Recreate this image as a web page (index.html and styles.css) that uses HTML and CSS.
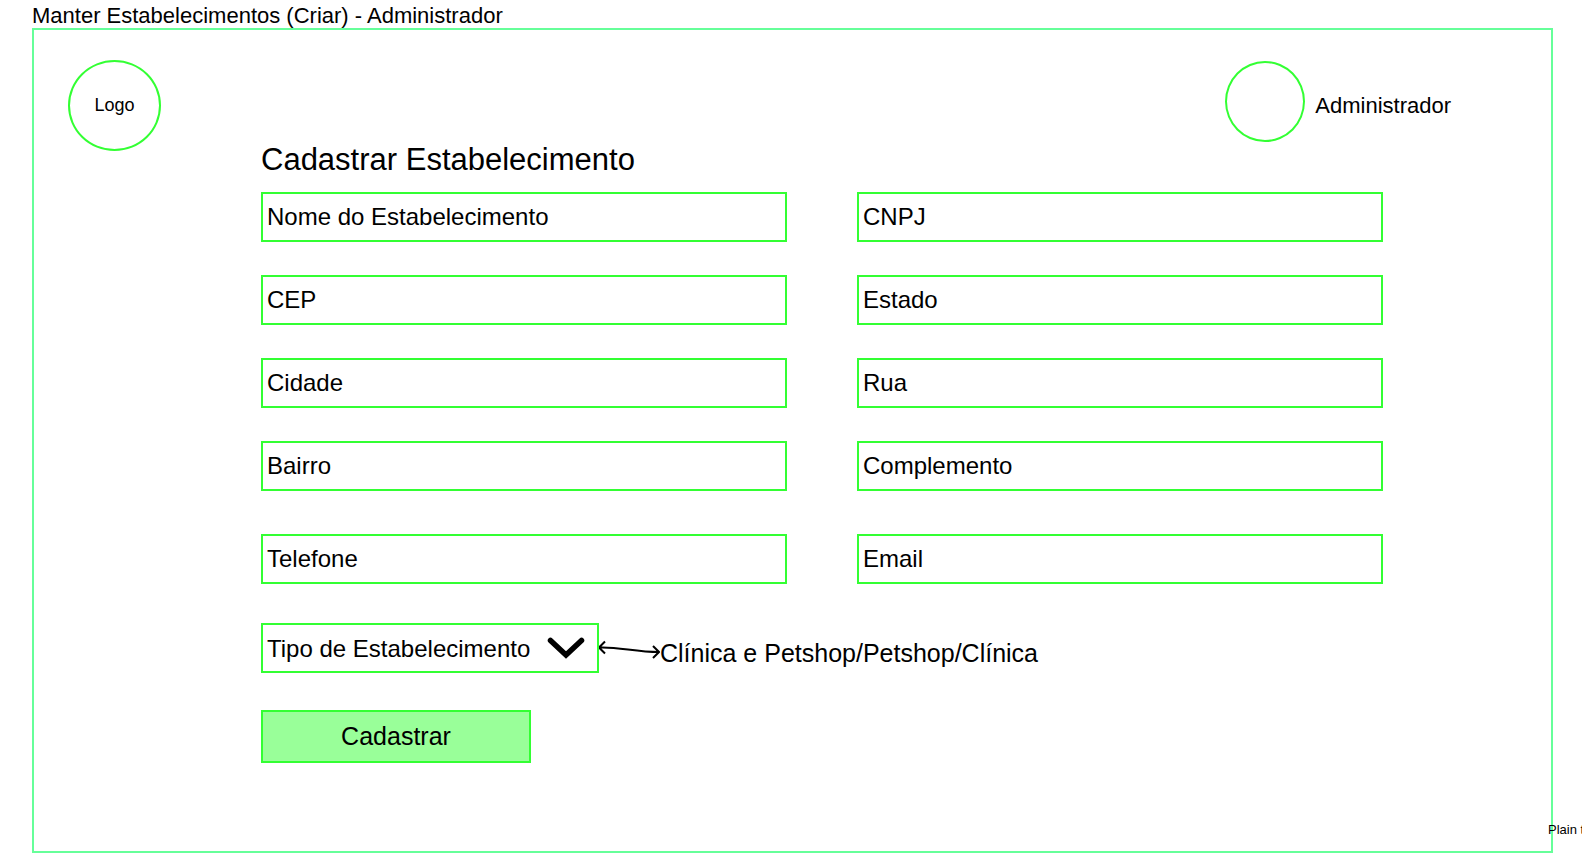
FILE: index.html
```html
<!DOCTYPE html>
<html lang="pt-BR">
<head>
<meta charset="utf-8">
<title>Manter Estabelecimentos</title>
<link rel="stylesheet" href="styles.css">
</head>
<body>
<h1 class="page-title">Manter Estabelecimentos (Criar) - Administrador</h1>
<main class="frame">
  <div class="side"><div class="logo">Logo</div></div>
  <div class="content">
    <header class="user">
      <div class="avatar"></div>
      <span class="user-name">Administrador</span>
    </header>
    <form class="form">
      <h2 class="form-title">Cadastrar Estabelecimento</h2>
      <div class="fields">
        <input class="field" type="text" placeholder="Nome do Estabelecimento" aria-label="Nome do Estabelecimento">
        <input class="field" type="text" placeholder="CNPJ" aria-label="CNPJ">
        <input class="field" type="text" placeholder="CEP" aria-label="CEP">
        <input class="field" type="text" placeholder="Estado" aria-label="Estado">
        <input class="field" type="text" placeholder="Cidade" aria-label="Cidade">
        <input class="field" type="text" placeholder="Rua" aria-label="Rua">
        <input class="field" type="text" placeholder="Bairro" aria-label="Bairro">
        <input class="field" type="text" placeholder="Complemento" aria-label="Complemento">
      </div>
      <div class="fields contact">
        <input class="field" type="tel" placeholder="Telefone" aria-label="Telefone">
        <input class="field" type="email" placeholder="Email" aria-label="Email">
      </div>
      <div class="type-row">
        <div class="select-box">
          <select class="field" aria-label="Tipo de Estabelecimento">
            <option>Tipo de Estabelecimento</option>
          </select>
          <svg class="chevron" viewBox="0 0 38 22" width="38" height="22" aria-hidden="true">
            <path d="M3.500 3.500L19 18L34.500 3.500" fill="none" stroke="#000" stroke-width="5.500" stroke-linecap="round" stroke-linejoin="miter"/>
          </svg>
        </div>
        <svg class="arrow" viewBox="0 0 61 24" width="61" height="24" aria-hidden="true">
          <path d="M0 11.500C19 10.500 36 16 60 16M6 5.500L0 11.500L6 17.500M54 10L60 16L54 22" fill="none" stroke="#000" stroke-width="2"/>
        </svg>
        <span class="note">Clínica e Petshop/Petshop/Clínica</span>
      </div>
      <button class="submit" type="submit">Cadastrar</button>
    </form>
  </div>
  <span class="plain">Plain text</span>
</main>
</body>
</html>
```

FILE: styles.css
```css
* {
  box-sizing: border-box;
}

body {
  margin: 0;
  overflow: hidden;
  background: #fff;
  color: #000;
  font-family: "Liberation Sans", Arial, sans-serif;
}

.page-title {
  margin: 0;
  padding: 4px 32px 0;
  font-size: 22px;
  font-weight: 400;
  line-height: 24px;
}

.frame {
  position: relative;
  display: grid;
  grid-template-columns: 227px 1fr;
  min-height: calc(100vh - 38px);
  margin: 0 29px 0 32px;
  border: 2px solid #66ff99;
}

.side {
  padding: 30px 0 0 34px;
}

.logo {
  display: grid;
  place-items: center;
  width: 93px;
  height: 91px;
  border: 2px solid #33ff33;
  border-radius: 50%;
  font-size: 18px;
}

.user {
  display: flex;
  align-items: center;
  justify-content: flex-end;
  gap: 10px;
  padding: 31px 100px 0 0;
}

.avatar {
  width: 80px;
  height: 81px;
  border: 2px solid #33ff33;
  border-radius: 50%;
}

.user-name {
  padding-top: 8px;
  font-size: 22px;
}

.form {
  padding-right: 168px;
}

.form-title {
  margin: 0;
  padding-bottom: 14px;
  font-size: 31px;
  font-weight: 400;
  line-height: 36px;
}

.fields {
  display: grid;
  grid-template-columns: 1fr 1fr;
  gap: 33px 70px;
}

.contact {
  margin-top: 43px;
}

.field {
  width: 100%;
  height: 50px;
  padding: 0 4px;
  border: 2px solid #33ff33;
  border-radius: 0;
  background: #fff;
  color: #000;
  font-family: inherit;
  font-size: 24px;
  appearance: none;
}

.field::placeholder {
  color: #000;
  opacity: 1;
}

.type-row {
  display: flex;
  align-items: center;
  margin-top: 39px;
}

.select-box {
  position: relative;
  width: 338px;
  height: 50px;
}

.chevron {
  position: absolute;
  top: 14px;
  right: 14px;
  pointer-events: none;
}

.note {
  padding-top: 10px;
  font-size: 25px;
  white-space: nowrap;
}

.submit {
  display: block;
  width: 270px;
  height: 53px;
  margin-top: 37px;
  border: 2px solid #33ff33;
  background: #99ff99;
  color: #000;
  font-family: inherit;
  font-size: 25px;
}

.plain {
  position: absolute;
  bottom: 14px;
  left: 100%;
  margin-left: -3px;
  font-size: 13px;
  white-space: nowrap;
}
```
